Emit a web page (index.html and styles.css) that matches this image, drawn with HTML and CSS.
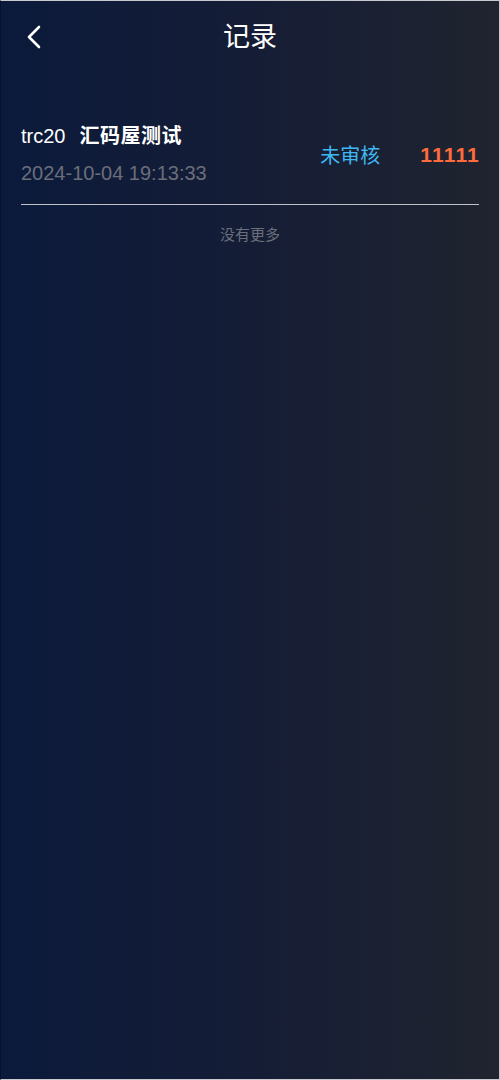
FILE: index.html
```html
<!DOCTYPE html>
<html lang="zh">
<head>
<meta charset="utf-8">
<title>记录</title>
<link rel="stylesheet" href="styles.css">
</head>
<body>
<div class="page">
  <header class="header">
    <span class="back">
      <svg width="16" height="24" viewBox="0 0 16 24"><path d="M13 2 L3 12 L13 22" fill="none" stroke="#fff" stroke-width="2.6" stroke-linecap="round" stroke-linejoin="round"/></svg>
    </span>
    <h1 class="title">记录</h1>
  </header>
  <div class="list">
    <div class="item">
      <div class="info">
        <div class="name"><span class="coin">trc20</span><span class="label">汇码屋测试</span></div>
        <div class="date">2024-10-04 19:13:33</div>
      </div>
      <div class="status">未审核</div>
      <div class="amount">11111</div>
    </div>
    <div class="nomore">没有更多</div>
  </div>
</div>
</body>
</html>
```
FILE: styles.css
```css
html, body {
  margin: 0;
  padding: 0;
}
body {
  font-family: "Liberation Sans", "Noto Sans CJK SC", sans-serif;
  background: #0c1a3a;
}
.page {
  box-sizing: border-box;
  width: 500px;
  height: 1080px;
  background: linear-gradient(to right, #0b1a3b 0%, #151d36 50%, #20242f 100%);
  border-top: 1px solid #c9cacf;
  border-right: 1px solid #c9cacf;
  border-bottom: 1px solid #c9cacf;
  border-left: 1px solid #08122c;
  color: #fff;
}
.header {
  position: relative;
  height: 73px;
  display: flex;
  align-items: center;
  justify-content: center;
}
.back {
  position: absolute;
  left: 25px;
  top: 24px;
  display: flex;
}
.title {
  margin: 0;
  font-size: 27px;
  font-weight: normal;
  line-height: 1;
  padding-bottom: 1px;
}
.list {
  padding: 0 20px;
}
.item {
  display: flex;
  align-items: center;
  padding-top: 47px;
  padding-bottom: 16px;
  border-bottom: 1px solid #bfc2c9;
}
.info {
  flex: 1;
  display: flex;
  flex-direction: column;
  gap: 7px;
}
.name {
  display: flex;
  align-items: center;
  gap: 14px;
  line-height: 30px;
}
.coin {
  font-size: 20px;
}
.label {
  font-size: 20px;
  font-weight: bold;
  letter-spacing: 0.5px;
}
.date {
  font-size: 20px;
  line-height: 30px;
  color: #6a6e79;
}
.status {
  font-size: 20px;
  color: #3eb8f2;
  margin-right: 40px;
}
.amount {
  font-size: 21px;
  font-weight: bold;
  letter-spacing: 1.2px;
  margin-right: -1px;
  color: #ff6b3c;
  padding-top: 1px;
}
.nomore {
  text-align: center;
  font-size: 15px;
  color: #6b6f7b;
  margin-top: 18px;
}
```
